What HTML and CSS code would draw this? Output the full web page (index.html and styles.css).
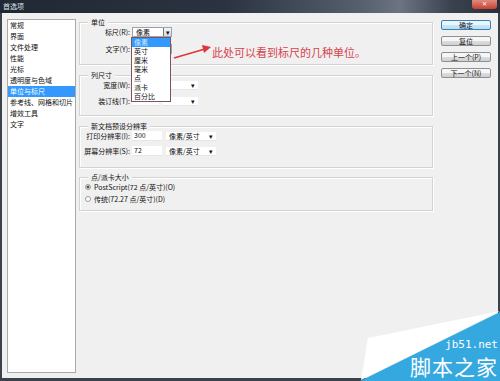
FILE: index.html
```html
<!DOCTYPE html>
<html>

<head>
    <title>首选项</title>
    <meta charset="utf-8">
    <link rel="stylesheet" href="styles.css">
</head>

<body>
    <div class="titlebar">
        <span class="title">首选项</span>
        <span class="close">✕</span>
    </div>

    <div class="frame">
        <ul class="liste">
            <li>常规</li>
            <li>界面</li>
            <li>文件处理</li>
            <li>性能</li>
            <li>光标</li>
            <li>透明度与色域</li>
            <li class="valgt">单位与标尺</li>
            <li>参考线、网格和切片</li>
            <li>增效工具</li>
            <li>文字</li>
        </ul>

        <div class="main">
            <div class="group g1">
                <div class="legend">单位</div>
                <div class="row">
                    <span class="label">标尺(R):</span>
                    <div class="select sel-unit focus">
                        <span>像素</span>
                        <span class="arrowbtn">▾</span>
                        <ul class="dropdown">
                            <li class="valgt">像素</li>
                            <li>英寸</li>
                            <li>厘米</li>
                            <li>毫米</li>
                            <li>点</li>
                            <li>派卡</li>
                            <li>百分比</li>
                        </ul>
                    </div>
                </div>
                <div class="row">
                    <span class="label">文字(Y):</span>
                    <div class="select sel-unit"></div>
                </div>
            </div>

            <div class="group g2">
                <div class="legend">列尺寸</div>
                <div class="row">
                    <span class="label">宽度(W):</span>
                    <div class="input small"></div>
                    <div class="select sel-col"><span></span><span class="caret">▾</span></div>
                </div>
                <div class="row">
                    <span class="label">装订线(T):</span>
                    <div class="input small"></div>
                    <div class="select sel-col"><span></span><span class="caret">▾</span></div>
                </div>
            </div>

            <div class="group g3">
                <div class="legend">新文档预设分辨率</div>
                <div class="row">
                    <span class="label">打印分辨率(I):</span>
                    <div class="input">300</div>
                    <div class="select sel-res"><span>像素/英寸</span><span class="caret">▾</span></div>
                </div>
                <div class="row">
                    <span class="label">屏幕分辨率(S):</span>
                    <div class="input">72</div>
                    <div class="select sel-res"><span>像素/英寸</span><span class="caret">▾</span></div>
                </div>
            </div>

            <div class="group g4">
                <div class="legend">点/派卡大小</div>
                <div class="radio"><span class="dot on"></span>PostScript(72 点/英寸)(O)</div>
                <div class="radio"><span class="dot"></span>传统(72.27 点/英寸)(D)</div>
            </div>
        </div>

        <div class="knapper">
            <button class="standard">确定</button>
            <button>复位</button>
            <button>上一个(P)</button>
            <button>下一个(N)</button>
        </div>
    </div>

    <!-- rød pil med forklaring -->
    <svg class="pil" width="50" height="20" viewBox="0 0 50 20">
        <line x1="1" y1="15" x2="32" y2="6" stroke="#e0353a" stroke-width="1.6" />
        <polygon points="38,4 29,2 31,10" fill="#e0353a" />
    </svg>
    <div class="note">此处可以看到标尺的几种单位。</div>

    <div class="watermark">
        <svg width="140" height="70" viewBox="0 0 140 70">
            <polygon points="8,27 140,0 1,69" fill="#ffffff" />
            <polygon points="0,70 140,1 140,70" fill="#35a8e0" />
        </svg>
        <div class="wm-text">
            <span class="wm-small">jb51.net</span>
            <span class="wm-big">脚本之家</span>
        </div>
    </div>
</body>

</html>
```

FILE: styles.css
```css
body {
    margin: 0;
    width: 500px;
    height: 381px;
    overflow: hidden;
    position: relative;
    background-color: #3b424b;
    font-family: "Noto Sans CJK SC", "Liberation Sans", sans-serif;
    font-size: 7px;
    color: #111;
}

ul {
    list-style: none;
    margin: 0;
    padding: 0;
}

.titlebar {
    height: 13px;
    display: flex;
    justify-content: space-between;
    background: linear-gradient(to right, #1f2833 0%, #2a333f 45%, #56606d 72%, #6b7480 80%, #3a434f 90%, #28303b 100%);
}

.title {
    color: #dfe4ea;
    line-height: 12px;
    padding-left: 3px;
}

.close {
    width: 25px;
    height: 9px;
    margin-right: 3px;
    background: linear-gradient(#e08a80, #c8402f);
    border-radius: 0 0 3px 3px;
    color: white;
    font-size: 6px;
    line-height: 8px;
    text-align: center;
}

.frame {
    height: 365px;
    display: flex;
    background-color: #f0f0f0;
    border-left: 2px solid #3b424b;
    border-right: 2px solid #3b424b;
    border-bottom: 3px solid #3b424b;
}

.liste {
    margin: 6px 0 0 5px;
    width: 67px;
    height: 352px;
    background-color: #fff;
    border: 1px solid #a9a9a9;
}

.liste li {
    height: 11px;
    line-height: 11px;
    padding-left: 2px;
    white-space: nowrap;
}

.liste .valgt {
    background-color: #3399ff;
    color: #fff;
}

.main {
    margin-left: 3px;
    width: 354px;
    display: flex;
    flex-direction: column;
}

.group {
    border: 1px solid #d3d3d3;
    box-shadow: inset 1px 1px 0 #fff, 1px 1px 0 #fff;
    box-sizing: border-box;
}

.legend {
    width: max-content;
    margin: -5px 0 0 8px;
    padding: 0 3px;
    line-height: 9px;
    background-color: #f0f0f0;
}

.g1 {
    margin-top: 9px;
    height: 43px;
}

.g2 {
    margin-top: 10px;
    height: 41px;
}

.g3 {
    margin-top: 10px;
    height: 42px;
}

.g4 {
    margin-top: 9px;
    height: 34px;
}

.row {
    display: flex;
    align-items: center;
    height: 10px;
}

.g1 .row:first-of-type {
    margin-top: 4px;
}

.g1 .row + .row {
    margin-top: 7px;
}

.g2 .row:first-of-type {
    margin-top: 3px;
}

.g2 .row + .row {
    margin-top: 6px;
}

.g3 .row:first-of-type {
    margin-top: 5px;
}

.g3 .row + .row {
    margin-top: 5px;
}

.label {
    width: 50px;
    padding-right: 1px;
    text-align: right;
    white-space: nowrap;
}

.input {
    margin-left: 1px;
    width: 28px;
    height: 9px;
    line-height: 9px;
    padding-left: 2px;
    background-color: #fff;
    border-bottom: 1px solid #e6e6e6;
}

.input.small {
    width: 25px;
}

.select {
    position: relative;
    display: flex;
    justify-content: space-between;
    align-items: center;
    height: 9px;
    padding-left: 3px;
    background-color: #fff;
    border-bottom: 1px solid #e6e6e6;
    box-sizing: border-box;
}

.sel-unit {
    margin-left: 1px;
    width: 40px;
    border: 1px solid #9aa3ad;
    height: 10px;
}

.focus {
    z-index: 5;
}

.sel-col {
    margin-left: 3px;
    width: 36px;
}

.sel-res {
    margin-left: 4px;
    width: 50px;
}

.caret {
    font-size: 7px;
    padding-right: 3px;
}

.arrowbtn {
    width: 7px;
    height: 8px;
    line-height: 8px;
    text-align: center;
    border-left: 1px solid #6f7780;
    background: linear-gradient(#f4f6f8, #d6dbe0);
    font-size: 7px;
}

.dropdown {
    position: absolute;
    top: 9px;
    left: -2px;
    width: 38px;
    height: 63px;
    background-color: #fff;
    border: 1px solid #7a5566;
}

.dropdown li {
    height: 9px;
    line-height: 9px;
    padding-left: 2px;
}

.dropdown .valgt {
    background-color: #3399ff;
    color: #cfe6ff;
}

.radio {
    display: flex;
    align-items: center;
    height: 10px;
    padding-left: 5px;
}

.radio:first-of-type {
    margin-top: 2px;
}

.radio + .radio {
    margin-top: 2px;
}

.dot {
    width: 4px;
    height: 4px;
    margin-right: 3px;
    border: 1px solid #9a9a9a;
    border-radius: 50%;
    background-color: #fff;
}

.dot.on {
    background: radial-gradient(#555 40%, #ddd 60%);
}

.knapper {
    margin: 7px 0 0 8px;
    display: flex;
    flex-direction: column;
    gap: 6px;
}

.knapper button {
    width: 50px;
    height: 10px;
    padding: 0;
    font-family: "Noto Sans CJK SC", sans-serif;
    font-size: 7px;
    line-height: 8px;
    color: #111;
    border: 1px solid #8d8f92;
    border-radius: 2px;
    background: linear-gradient(#f6f6f6 45%, #dcdcdc 55%, #d0d0d0);
}

.knapper .standard {
    border-color: #3c7fb1;
    background: linear-gradient(#eaf6fd 45%, #c6e7f8 55%, #b5dff5);
}

.pil {
    position: absolute;
    left: 173px;
    top: 43px;
}

.note {
    position: absolute;
    left: 212px;
    top: 44px;
    font-size: 11px;
    line-height: 16px;
    color: #d6424e;
}

.watermark {
    position: absolute;
    left: 360px;
    top: 311px;
    width: 140px;
    height: 70px;
}

.wm-text {
    position: absolute;
    right: 2px;
    bottom: 0;
    display: flex;
    flex-direction: column;
    align-items: flex-end;
    color: #fff;
}

.wm-small {
    font-family: "DejaVu Sans Mono", monospace;
    font-size: 11px;
    line-height: 13px;
}

.wm-big {
    font-size: 21px;
    line-height: 30px;
    letter-spacing: 1px;
}
```
